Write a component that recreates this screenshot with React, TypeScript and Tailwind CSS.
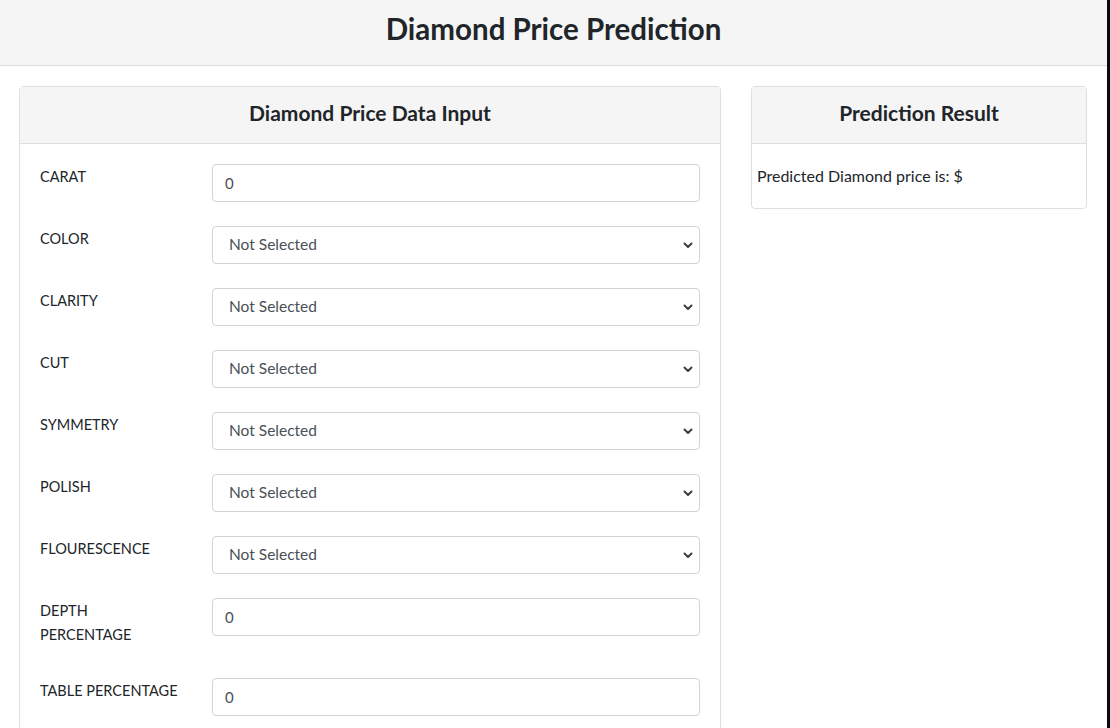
import React from 'react'

const selects = ['COLOR', 'CLARITY', 'CUT', 'SYMMETRY', 'POLISH', 'FLOURESCENCE']

const Chevron = () => (
  <svg
    className="pointer-events-none absolute right-[6px] top-1/2 -translate-y-1/2"
    width="12"
    height="12"
    viewBox="0 0 12 12"
    fill="none"
  >
    <path d="M2.5 4.5 6 8 9.5 4.5" stroke="#3b3f44" strokeWidth="2" strokeLinecap="round" strokeLinejoin="round" />
  </svg>
)

const TextRow = ({ label, twoLine }: { label: string; twoLine?: boolean }) => (
  <div className="flex mb-6">
    <label className={`w-[172px] shrink-0 leading-6 text-[14.5px] text-[#212529] pt-px pb-[7px] ${twoLine ? 'pr-[60px]' : ''}`}>
      {label}
    </label>
    <input
      defaultValue="0"
      className="w-[488px] h-[38px] rounded border border-[#ced4da] px-3 text-[15px] text-[#495057] outline-none"
    />
  </div>
)

const SelectRow = ({ label }: { label: string }) => (
  <div className="flex mb-6">
    <label className="w-[172px] shrink-0 leading-6 text-[14.5px] text-[#212529] pt-px pb-[7px]">{label}</label>
    <div className="relative w-[488px]">
      <select className="w-full h-[38px] appearance-none rounded border border-[#ced4da] bg-white pl-4 pr-8 text-[15.5px] text-[#495057] outline-none">
        <option>Not Selected</option>
      </select>
      <Chevron />
    </div>
  </div>
)

export default function App() {
  return (
    <div className="flex h-[728px] overflow-hidden bg-white font-['Lato',sans-serif]">
      <div className="w-[1107px] shrink-0">
        <header className="h-[66px] bg-[#f5f5f5] border-b border-[#dcdcdc] flex items-center justify-center">
          <h1 className="text-[29.5px] font-bold text-[#212529] -mt-[6px]">Diamond Price Prediction</h1>
        </header>

        <div className="flex gap-[30px] pl-[19px] pt-5">
          <section className="w-[702px] shrink-0 border border-[#dfdfdf] rounded">
            <div className="h-[57px] bg-[#f5f5f5] border-b border-[#dfdfdf] flex items-center justify-center">
              <h2 className="text-[21px] font-bold text-[#212529] -mt-[4px]">Diamond Price Data Input</h2>
            </div>
            <div className="px-5 pt-5">
              <TextRow label="CARAT" />
              {selects.map((s) => (
                <SelectRow key={s} label={s} />
              ))}
              <TextRow label="DEPTH PERCENTAGE" twoLine />
              <TextRow label="TABLE PERCENTAGE" />
            </div>
          </section>

          <section className="w-[336px] shrink-0 self-start border border-[#dfdfdf] rounded">
            <div className="h-[57px] bg-[#f5f5f5] border-b border-[#dfdfdf] flex items-center justify-center">
              <h2 className="text-[21px] font-bold text-[#212529] -mt-[4px]">Prediction Result</h2>
            </div>
            <div className="px-[5px] py-5 leading-6 text-[16px] text-[#212529]">Predicted Diamond price is: $</div>
          </section>
        </div>
      </div>
      <div className="w-[3px] bg-[#0a0a12] shrink-0" />
    </div>
  )
}
